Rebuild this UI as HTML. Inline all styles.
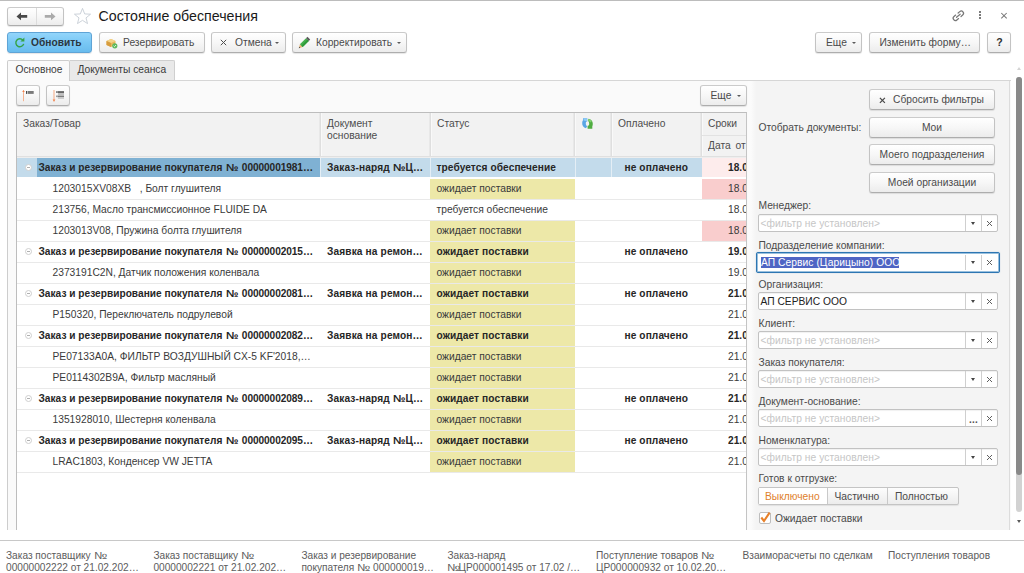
<!DOCTYPE html>
<html lang="ru">
<head>
<meta charset="utf-8">
<title>Состояние обеспечения</title>
<style>
html,body{margin:0;padding:0;}
.hd{color:#4d4d4d;line-height:12px;}
body{width:1024px;height:573px;position:relative;overflow:hidden;background:#fff;font-family:"Liberation Sans",sans-serif;font-size:10.25px;color:#333;}
.a{position:absolute;white-space:nowrap;}
.btn{position:absolute;box-sizing:border-box;border:1px solid #c3c3c3;border-bottom-color:#adadad;border-top-color:#cbcbcb;border-radius:3px;background:linear-gradient(#ffffff,#f7f7f7 50%,#ececec);box-shadow:0 1px 1px rgba(0,0,0,.10);white-space:nowrap;color:#4a4a4a;}
.btn .t{position:absolute;top:0;line-height:19px;}
.arr{position:absolute;width:0;height:0;border-left:2px solid transparent;border-right:2px solid transparent;border-top:2.5px solid #5a5a5a;margin-left:-.6px;}
.lbl{position:absolute;white-space:nowrap;color:#4a4a4a;line-height:12px;}
.inp{position:absolute;box-sizing:border-box;border:1px solid #c2c2c2;border-radius:2px;background:#fff;box-shadow:inset 0 1px 1px rgba(0,0,0,.06);}
.inp .v{position:absolute;left:1.5px;top:1px;line-height:16px;font-size:10.25px;white-space:nowrap;color:#c6c6c6;letter-spacing:.05px;}
.inp .d1,.inp .d2{position:absolute;top:0;bottom:0;width:1px;background:#cfcfcf;}
.inp .d1{left:206px;}.inp .d2{left:222px;}
.inp .ar{position:absolute;left:212px;top:7px;width:0;height:0;border-left:2.5px solid transparent;border-right:2.5px solid transparent;border-top:3px solid #444;}
.inp .x{position:absolute;left:226px;top:4px;width:9px;height:9px;}
.row{position:absolute;left:17px;width:729px;height:20px;}
.sep{position:absolute;left:17px;width:729px;height:1px;background:#e9e9e9;}
.c{position:absolute;top:0;height:20px;line-height:20px;white-space:nowrap;color:#3a3a3a;}
.b{font-weight:bold;color:#262626;font-size:10.15px;letter-spacing:.02px;}
.y{position:absolute;left:413px;width:145px;top:0;height:20px;background:#ede8a8;}
.no{display:inline-block;transform:scaleX(1.1);transform-origin:0 50%;margin:0 1.6px 0 .9px;}
.dg{letter-spacing:-.08px;}
.tg{position:absolute;left:7.7px;top:6.3px;width:7px;height:7px;box-sizing:border-box;border:1px solid #cfcfcf;border-radius:50%;background:#fff;}
.tg:after{content:"";position:absolute;left:1px;top:2px;width:3px;height:1px;background:#b0b0b0;}
.bt{position:absolute;white-space:nowrap;color:#5c5c5c;line-height:13px;font-size:10.15px;}
</style>
</head>
<body>
<!-- top line -->
<div class="a" style="left:0;top:0;width:1024px;height:1px;background:#bcbcbc"></div>

<!-- nav buttons -->
<div class="btn" style="left:7px;top:7px;width:57px;height:19px;"></div>
<div class="a" style="left:36px;top:8px;width:1px;height:17px;background:#dcdcdc"></div>
<svg class="a" style="left:16px;top:12px" width="12" height="9" viewBox="0 0 12 9"><path d="M0.5 4.4L5 0.6V3.1H11.2V5.7H5V8.2Z" fill="#484848"/></svg>
<svg class="a" style="left:44px;top:12px" width="12" height="9" viewBox="0 0 12 9"><path d="M11.5 4.4L7 0.6V3.1H0.8V5.7H7V8.2Z" fill="#aaaaaa"/></svg>
<!-- star -->
<svg class="a" style="left:72.5px;top:7px" width="19" height="18" viewBox="0 0 20 19"><path d="M10 1.5L12.3 7.3L18.5 7.6L13.7 11.5L15.3 17.5L10 14.1L4.7 17.5L6.3 11.5L1.5 7.6L7.7 7.3Z" fill="#fff" stroke="#c3cad2" stroke-width="0.9"/></svg>
<!-- title -->
<div class="a" style="left:98.5px;top:7px;font-size:14.2px;line-height:18px;color:#1a1a1a;">Состояние обеспечения</div>

<!-- window icons -->
<svg class="a" style="left:950.6px;top:8.8px" width="15.1" height="14" viewBox="0 0 14 13"><g fill="none" stroke="#777" stroke-width="1.15" stroke-linecap="round" transform="rotate(-40 6.8 6.3)"><path d="M5.3 4.2H3.3A2.1 2.1 0 0 0 3.3 8.4H5.3"/><path d="M8.3 4.2H10.3A2.1 2.1 0 0 1 10.3 8.4H8.3"/><path d="M4.6 6.3H9"/></g></svg>
<div class="a" style="left:979.4px;top:11px;width:2px;height:2px;background:#7c7c7c;box-shadow:0 3px 0 #7c7c7c,0 6px 0 #7c7c7c"></div>
<svg class="a" style="left:1000px;top:12px" width="8" height="8" viewBox="0 0 8 8"><path d="M1.3 1L6.7 6.4M6.7 1L1.3 6.4" stroke="#787878" stroke-width="1.05"/></svg>

<!-- toolbar -->
<div class="btn" style="left:7px;top:32px;width:85px;height:21px;border-color:#5fa4d6;background:linear-gradient(#92d5fb,#7ac8f5 50%,#69bcee);color:#2d3a45;">
  <svg class="a" style="left:5.5px;top:4px" width="12" height="12" viewBox="0 0 12 12"><path d="M8.9 3.1A4 4 0 1 0 9.7 6.9" fill="none" stroke="#35a345" stroke-width="1.4"/><path d="M10.4 0.6V4.6H6.4Z" fill="#35a345"/></svg>
  <span class="t b" style="left:23px;color:#2b3640;font-size:10.2px">Обновить</span>
</div>
<div class="btn" style="left:99px;top:32px;width:106px;height:21px;">
  <svg class="a" style="left:6px;top:4px" width="12" height="12" viewBox="0 0 12 12"><path d="M0.5 4L5 2L9.5 4V8L5 10L0.5 8Z" fill="#e7b75a"/><path d="M0.5 4L5 6L9.5 4L5 2Z" fill="#f4d48a"/><path d="M5 6V10L0.5 8V4Z" fill="#d79c3e"/><circle cx="8.8" cy="8.8" r="2.6" fill="#5cb85c"/><path d="M7.6 8.8L8.5 9.7L10 8" stroke="#fff" stroke-width=".8" fill="none"/></svg>
  <span class="t" style="left:23px">Резервировать</span>
</div>
<div class="btn" style="left:211px;top:32px;width:75px;height:21px;">
  <svg class="a" style="left:8px;top:6px" width="7" height="7" viewBox="0 0 7 7"><path d="M0.8 0.8L6.2 6.2M6.2 0.8L0.8 6.2" stroke="#505050" stroke-width="1"/></svg>
  <span class="t" style="left:23px">Отмена</span>
  <span class="arr" style="left:64px;top:9px"></span>
</div>
<div class="btn" style="left:292px;top:32px;width:115px;height:21px;">
  <svg class="a" style="left:5px;top:3px" width="13" height="13" viewBox="0 0 13 13"><path d="M0.8 12.2L1.9 8.3L4.7 11.1Z" fill="#eab676"/><path d="M1.9 8.3L8 2.2L10.8 5L4.7 11.1Z" fill="#43b04c"/><path d="M3.3 9.7L9.4 3.6L10.8 5L4.7 11.1Z" fill="#2f9a3a"/><path d="M8 2.2L9.4 0.8L12.2 3.6L10.8 5Z" fill="#5a5a5a"/><path d="M0.8 12.2L1.2 10.7L2.3 11.8Z" fill="#444"/></svg>
  <span class="t" style="left:23px">Корректировать</span>
  <span class="arr" style="left:105px;top:9px"></span>
</div>
<div class="btn" style="left:815px;top:32px;width:47px;height:21px;">
  <span class="t" style="left:10px">Еще</span>
  <span class="arr" style="left:37px;top:9px"></span>
</div>
<div class="btn" style="left:869px;top:32px;width:111px;height:21px;">
  <span class="t" style="left:9.5px">Изменить форму…</span>
</div>
<div class="btn" style="left:987px;top:32px;width:24px;height:21px;">
  <span class="t" style="left:8.3px;font-weight:bold;font-size:10.6px;color:#303030">?</span>
</div>

<!-- tabs -->
<div class="a" style="left:70px;top:60px;width:105px;height:20px;background:#e9e9e9;border:1px solid #cfcfcf;border-left:none;border-bottom:none;box-sizing:border-box;border-radius:0 2px 0 0"></div>
<div class="a" style="left:7px;top:80px;width:1004px;height:450px;background:#fafafa;border-left:1px solid #cdcdcd;border-top:1px solid #d6d6d6;box-sizing:border-box;"></div>
<div class="a" style="left:7px;top:60px;width:63px;height:21px;background:#fafafa;border:1px solid #cdcdcd;border-bottom:none;box-sizing:border-box;border-radius:2px 2px 0 0"></div>
<div class="a" style="left:15.5px;top:63px;line-height:13px;color:#3a3a3a">Основное</div>
<div class="a" style="left:77.5px;top:63px;line-height:13px;color:#3a3a3a">Документы сеанса</div>

<!-- small buttons -->
<div class="btn" style="left:16px;top:85px;width:24px;height:21px;">
  <svg class="a" style="left:5px;top:3px" width="13" height="13" viewBox="0 0 13 13"><path d="M1.5 12.2V1.5" stroke="#f6a176" stroke-width="0.8"/><path d="M0.2 2.9L1.5 0.9L2.8 2.9Z" fill="#f2814a"/><rect x="4" y="2" width="1.1" height="2.9" fill="#4a4a4a"/><rect x="5.6" y="2" width="6.1" height="2.9" fill="#7a7a7a"/></svg>
</div>
<div class="btn" style="left:46px;top:85px;width:24px;height:21px;">
  <svg class="a" style="left:5px;top:3px" width="13" height="13" viewBox="0 0 13 13"><path d="M2 1V11.5" stroke="#f6a176" stroke-width="0.9"/><path d="M0.7 10.6L2 12.9L3.3 10.6Z" fill="#f2814a"/><rect x="4.3" y="2.1" width="0.9" height="1.9" fill="#555"/><rect x="5.4" y="2.1" width="6.6" height="1.9" fill="#666"/><rect x="5.9" y="4.1" width="6.1" height="1.8" fill="#b9b9b9"/><rect x="4.3" y="6.5" width="0.9" height="1.6" fill="#777"/><rect x="5.4" y="6.5" width="6.6" height="1.7" fill="#7c7c7c"/><rect x="5.9" y="8.3" width="6.1" height="1.5" fill="#c4c4c4"/></svg>
</div>
<div class="btn" style="left:700px;top:85px;width:46.5px;height:21px;">
  <span class="t" style="left:9.5px">Еще</span>
  <span class="arr" style="left:36.5px;top:9px"></span>
</div>

<!-- TABLE -->
<div class="a" style="left:16px;top:112px;width:731px;height:418px;background:#fff;border-left:1px solid #bdbdbd;border-top:1px solid #bdbdbd;border-right:1px solid #c4c4c4;box-sizing:border-box"></div>
<div class="a" style="left:17px;top:113px;width:729px;height:44px;background:#f2f2f2;border-bottom:1px solid #e0e0e0;box-sizing:border-box"></div>
<div class="a" style="left:17px;top:157px;width:729px;height:1px;background:#eeeeee"></div>
<div class="a" style="left:319px;top:113px;width:3px;height:43px;background:linear-gradient(90deg,#e8e8e8 0,#e8e8e8 1px,#dfdfdf 1px,#dfdfdf 2px,#f9f9f9 2px)"></div>
<div class="a" style="left:429px;top:113px;width:3px;height:43px;background:linear-gradient(90deg,#e8e8e8 0,#e8e8e8 1px,#dfdfdf 1px,#dfdfdf 2px,#f9f9f9 2px)"></div>
<div class="a" style="left:573px;top:113px;width:3px;height:43px;background:linear-gradient(90deg,#e8e8e8 0,#e8e8e8 1px,#dfdfdf 1px,#dfdfdf 2px,#f9f9f9 2px)"></div>
<div class="a" style="left:610px;top:113px;width:3px;height:43px;background:linear-gradient(90deg,#e8e8e8 0,#e8e8e8 1px,#dfdfdf 1px,#dfdfdf 2px,#f9f9f9 2px)"></div>
<div class="a" style="left:700px;top:113px;width:3px;height:43px;background:linear-gradient(90deg,#e8e8e8 0,#e8e8e8 1px,#dfdfdf 1px,#dfdfdf 2px,#f9f9f9 2px)"></div>
<div class="a" style="left:702px;top:135px;width:44px;height:1px;background:#e2e2e2"></div>
<div class="a hd" style="left:23px;top:118px;">Заказ/Товар</div>
<div class="a hd" style="left:327px;top:118px;">Документ</div>
<div class="a hd" style="left:327px;top:130px;">основание</div>
<div class="a hd" style="left:437px;top:118px;">Статус</div>
<div class="a hd" style="left:618px;top:118px;">Оплачено</div>
<div class="a hd" style="left:708px;top:118px;">Сроки</div>
<div class="a hd" style="left:708px;top:140px;width:38px;overflow:hidden;word-spacing:2px;">Дата от</div>
<svg class="a" style="left:582px;top:118px" width="11" height="11" viewBox="0 0 11 11"><path d="M1 0.2H5.3V3.5H4.7C4 3.8 3.8 4.4 3.8 5.3C3.8 6.6 4.3 7.6 5.2 8.3L4 10.3C1.4 9.6 0 7.6 0.2 5C0.3 3.6 0.6 2.8 1 2.3Z" fill="#5aa6e4"/><path d="M1.4 0.3H5V3H3.6L1.6 2.4Z" fill="#8dcaf6"/><path d="M6.6 0.7C9.2 1.2 10.8 3.2 10.8 5.8C10.8 7 10.6 7.8 10.3 8.3V10.8H5.6V7.7H6.3C7 7.4 7.2 6.8 7.2 5.8C7.2 4.5 6.7 3.5 5.8 2.8Z" fill="#50ad42"/><path d="M6.5 1C8 1.3 9.2 2 9.9 3.2L8.2 4.4C7.8 3.6 7 3 5.9 2.6Z" fill="#7fd070"/></svg>
<div class="row" style="top:158px">
<div class="a" style="left:0;top:0;width:729px;height:19px;background:#c3dbeb"></div>
<div class="a" style="left:20px;top:0;width:283px;height:19px;background:#7fb1d3"></div>
<div class="a" style="left:303px;top:0;width:1px;height:19px;background:#e4eef5"></div>
<div class="a" style="left:413px;top:0;width:1px;height:19px;background:#e4eef5"></div>
<div class="a" style="left:558px;top:0;width:1px;height:19px;background:#e4eef5"></div>
<div class="a" style="left:594px;top:0;width:1px;height:19px;background:#e4eef5"></div>
<div class="a" style="left:685px;top:0;width:1px;height:19px;background:#e4eef5"></div>
<div class="a" style="left:685px;top:0;width:44px;height:19px;background:#fdecec"></div>
<div class="tg"></div>
<div class="c b" style="left:21.5px">Заказ и резервирование покупателя <span class="no">№</span> <span class="dg">00000001981</span>…</div>
<div class="c b" style="left:310px;letter-spacing:.14px">Заказ-наряд <span class="no" style="margin:0 1.2px 0 0">№</span>Ц…</div>
<div class="c b" style="left:419.5px;letter-spacing:.1px">требуется обеспечение</div>
<div class="c b" style="left:607.5px;letter-spacing:.1px">не оплачено</div>
<div class="c b" style="left:711px;width:18px;overflow:hidden">18.0</div>
</div>
<div class="sep" style="top:178px;background:#fff"></div>
<div class="row" style="top:179px">
<div class="y"></div>
<div class="a" style="left:685px;top:0;width:44px;height:20px;background:#f9cdcd"></div>
<div class="c" style="left:35.5px">1203015XV08XB&nbsp;&nbsp; , Болт глушителя</div>
<div class="c" style="left:419.5px">ожидает поставки</div>
<div class="c" style="left:711px;width:18px;overflow:hidden">18.0</div>
</div>
<div class="sep" style="top:199px"></div>
<div class="row" style="top:200px">
<div class="c" style="left:35.5px">213756, Масло трансмиссионное FLUIDE DA</div>
<div class="c" style="left:419.5px">требуется обеспечение</div>
<div class="c" style="left:711px;width:18px;overflow:hidden">18.0</div>
</div>
<div class="sep" style="top:220px"></div>
<div class="row" style="top:221px">
<div class="y"></div>
<div class="a" style="left:685px;top:0;width:44px;height:20px;background:#f9cdcd"></div>
<div class="c" style="left:35.5px">1203013V08, Пружина болта глушителя</div>
<div class="c" style="left:419.5px">ожидает поставки</div>
<div class="c" style="left:711px;width:18px;overflow:hidden">18.0</div>
</div>
<div class="sep" style="top:241px"></div>
<div class="row" style="top:242px">
<div class="y"></div>
<div class="tg"></div>
<div class="c b" style="left:21.5px">Заказ и резервирование покупателя <span class="no">№</span> <span class="dg">00000002015</span>…</div>
<div class="c b" style="left:310px;letter-spacing:.14px">Заявка на ремон…</div>
<div class="c b" style="left:419.5px;letter-spacing:.1px">ожидает поставки</div>
<div class="c b" style="left:607.5px;letter-spacing:.1px">не оплачено</div>
<div class="c b" style="left:711px;width:18px;overflow:hidden">19.0</div>
</div>
<div class="sep" style="top:262px"></div>
<div class="row" style="top:263px">
<div class="y"></div>
<div class="c" style="left:35.5px">2373191C2N, Датчик положения коленвала</div>
<div class="c" style="left:419.5px">ожидает поставки</div>
<div class="c" style="left:711px;width:18px;overflow:hidden">19.0</div>
</div>
<div class="sep" style="top:283px"></div>
<div class="row" style="top:284px">
<div class="y"></div>
<div class="tg"></div>
<div class="c b" style="left:21.5px">Заказ и резервирование покупателя <span class="no">№</span> <span class="dg">00000002081</span>…</div>
<div class="c b" style="left:310px;letter-spacing:.14px">Заявка на ремон…</div>
<div class="c b" style="left:419.5px;letter-spacing:.1px">ожидает поставки</div>
<div class="c b" style="left:607.5px;letter-spacing:.1px">не оплачено</div>
<div class="c b" style="left:711px;width:18px;overflow:hidden">21.0</div>
</div>
<div class="sep" style="top:304px"></div>
<div class="row" style="top:305px">
<div class="y"></div>
<div class="c" style="left:35.5px">P150320, Переключатель подрулевой</div>
<div class="c" style="left:419.5px">ожидает поставки</div>
<div class="c" style="left:711px;width:18px;overflow:hidden">21.0</div>
</div>
<div class="sep" style="top:325px"></div>
<div class="row" style="top:326px">
<div class="y"></div>
<div class="tg"></div>
<div class="c b" style="left:21.5px">Заказ и резервирование покупателя <span class="no">№</span> <span class="dg">00000002082</span>…</div>
<div class="c b" style="left:310px;letter-spacing:.14px">Заявка на ремон…</div>
<div class="c b" style="left:419.5px;letter-spacing:.1px">ожидает поставки</div>
<div class="c b" style="left:607.5px;letter-spacing:.1px">не оплачено</div>
<div class="c b" style="left:711px;width:18px;overflow:hidden">21.0</div>
</div>
<div class="sep" style="top:346px"></div>
<div class="row" style="top:347px">
<div class="y"></div>
<div class="c" style="left:35.5px">PE07133A0A, ФИЛЬТР ВОЗДУШНЫЙ CX-5 KF'2018,…</div>
<div class="c" style="left:419.5px">ожидает поставки</div>
<div class="c" style="left:711px;width:18px;overflow:hidden">21.0</div>
</div>
<div class="sep" style="top:367px"></div>
<div class="row" style="top:368px">
<div class="y"></div>
<div class="c" style="left:35.5px">PE0114302B9A, Фильтр масляный</div>
<div class="c" style="left:419.5px">ожидает поставки</div>
<div class="c" style="left:711px;width:18px;overflow:hidden">21.0</div>
</div>
<div class="sep" style="top:388px"></div>
<div class="row" style="top:389px">
<div class="y"></div>
<div class="tg"></div>
<div class="c b" style="left:21.5px">Заказ и резервирование покупателя <span class="no">№</span> <span class="dg">00000002089</span>…</div>
<div class="c b" style="left:310px;letter-spacing:.14px">Заказ-наряд <span class="no" style="margin:0 1.2px 0 0">№</span>Ц…</div>
<div class="c b" style="left:419.5px;letter-spacing:.1px">ожидает поставки</div>
<div class="c b" style="left:607.5px;letter-spacing:.1px">не оплачено</div>
<div class="c b" style="left:711px;width:18px;overflow:hidden">21.0</div>
</div>
<div class="sep" style="top:409px"></div>
<div class="row" style="top:410px">
<div class="y"></div>
<div class="c" style="left:35.5px">1351928010, Шестерня коленвала</div>
<div class="c" style="left:419.5px">ожидает поставки</div>
<div class="c" style="left:711px;width:18px;overflow:hidden">21.0</div>
</div>
<div class="sep" style="top:430px"></div>
<div class="row" style="top:431px">
<div class="y"></div>
<div class="tg"></div>
<div class="c b" style="left:21.5px">Заказ и резервирование покупателя <span class="no">№</span> <span class="dg">00000002095</span>…</div>
<div class="c b" style="left:310px;letter-spacing:.14px">Заказ-наряд <span class="no" style="margin:0 1.2px 0 0">№</span>Ц…</div>
<div class="c b" style="left:419.5px;letter-spacing:.1px">ожидает поставки</div>
<div class="c b" style="left:607.5px;letter-spacing:.1px">не оплачено</div>
<div class="c b" style="left:711px;width:18px;overflow:hidden">21.0</div>
</div>
<div class="sep" style="top:451px"></div>
<div class="row" style="top:452px">
<div class="y"></div>
<div class="c" style="left:35.5px">LRAC1803, Конденсер VW JETTA</div>
<div class="c" style="left:419.5px">ожидает поставки</div>
<div class="c" style="left:711px;width:18px;overflow:hidden">21.0</div>
</div>
<div class="sep" style="top:472px"></div>

<!-- RIGHT PANEL -->
<div class="a" style="left:748px;top:81px;width:262px;height:449px;background:linear-gradient(90deg,#fbfbfb 0,#fbfbfb 3px,#f4f4f4 8px);border-right:1px solid #dcdcdc;box-sizing:border-box"></div>
<div class="btn" style="left:869px;top:89px;width:126px;height:21px;"><svg class="a" style="left:9px;top:6.5px" width="7" height="7" viewBox="0 0 7 7"><path d="M0.9 0.9L5.9 5.9M5.9 0.9L0.9 5.9" stroke="#4a4a4a" stroke-width="1.25"/></svg><span class="t" style="left:23px">Сбросить фильтры</span></div>
<div class="btn" style="left:869px;top:117px;width:126px;height:21px;"><span class="t" style="left:0;width:100%;text-align:center">Мои</span></div>
<div class="btn" style="left:869px;top:144px;width:126px;height:21px;"><span class="t" style="left:0;width:100%;text-align:center">Моего подразделения</span></div>
<div class="btn" style="left:869px;top:172px;width:126px;height:21px;"><span class="t" style="left:0;width:100%;text-align:center">Моей организации</span></div>
<div class="lbl" style="left:758.5px;top:122px">Отобрать документы:</div>
<div class="lbl" style="left:758.5px;top:200px">Менеджер:</div><div class="inp" style="left:758px;top:214px;width:240px;height:18px;"><div class="v">&lt;фильтр не установлен&gt;</div><div class="d1"></div><div class="d2"></div><div class="ar"></div><svg class="x" viewBox="0 0 9 9"><path d="M2 2L7 7M7 2L2 7" stroke="#606060" stroke-width="1"/></svg></div>
<div class="lbl" style="left:758.5px;top:240px">Подразделение компании:</div><div class="inp" style="left:756px;top:252px;width:244px;height:21px;border:1px solid #2d76b2;border-radius:2px;box-shadow:inset 0 0 0 1px rgba(70,140,195,.55),0 0 1px rgba(45,118,178,.5);"><div class="a" style="left:4px;top:3.5px;width:138px;height:11px;background:#4f65c4"></div><div class="v" style="left:4px;top:2px;color:#fff;">АП Сервис (Царицыно) ООО</div><div class="d1" style="left:208px;top:2px;bottom:2px"></div><div class="d2" style="left:224px;top:2px;bottom:2px"></div><div class="ar" style="left:214px;top:8px"></div><svg class="x" style="left:228px;top:5px" viewBox="0 0 9 9"><path d="M2 2L7 7M7 2L2 7" stroke="#606060" stroke-width="1"/></svg></div>
<div class="lbl" style="left:758.5px;top:279px">Организация:</div><div class="inp" style="left:758px;top:292px;width:240px;height:18px;"><div class="v" style="color:#222;letter-spacing:0">АП СЕРВИС ООО</div><div class="d1"></div><div class="d2"></div><div class="ar"></div><svg class="x" viewBox="0 0 9 9"><path d="M2 2L7 7M7 2L2 7" stroke="#606060" stroke-width="1"/></svg></div>
<div class="lbl" style="left:758.5px;top:318px">Клиент:</div><div class="inp" style="left:758px;top:331px;width:240px;height:18px;"><div class="v">&lt;фильтр не установлен&gt;</div><div class="d1"></div><div class="d2"></div><div class="ar"></div><svg class="x" viewBox="0 0 9 9"><path d="M2 2L7 7M7 2L2 7" stroke="#606060" stroke-width="1"/></svg></div>
<div class="lbl" style="left:758.5px;top:357px">Заказ покупателя:</div><div class="inp" style="left:758px;top:370px;width:240px;height:18px;"><div class="v">&lt;фильтр не установлен&gt;</div><div class="d1"></div><div class="d2"></div><div class="ar"></div><svg class="x" viewBox="0 0 9 9"><path d="M2 2L7 7M7 2L2 7" stroke="#606060" stroke-width="1"/></svg></div>
<div class="lbl" style="left:758.5px;top:396px">Документ-основание:</div><div class="inp" style="left:758px;top:409px;width:240px;height:18px;"><div class="v">&lt;фильтр не установлен&gt;</div><div class="d1"></div><div class="d2"></div><div class="a" style="left:210px;top:2px;line-height:16px;font-size:10px;font-weight:bold;color:#555;letter-spacing:.2px">...</div><svg class="x" viewBox="0 0 9 9"><path d="M2 2L7 7M7 2L2 7" stroke="#606060" stroke-width="1"/></svg></div>
<div class="lbl" style="left:758.5px;top:435px">Номенклатура:</div><div class="inp" style="left:758px;top:448px;width:240px;height:18px;"><div class="v">&lt;фильтр не установлен&gt;</div><div class="d1"></div><div class="d2"></div><div class="ar"></div><svg class="x" viewBox="0 0 9 9"><path d="M2 2L7 7M7 2L2 7" stroke="#606060" stroke-width="1"/></svg></div>
<div class="lbl" style="left:758.5px;top:473px">Готов к отгрузке:</div>
<div class="a" style="left:758px;top:487px;width:201px;height:18px;box-sizing:border-box;border:1px solid #c4c4c4;border-radius:2px;background:linear-gradient(#fdfdfd,#ececec);box-shadow:0 1px 1px rgba(0,0,0,.08)"></div>
<div class="a" style="left:759px;top:488px;width:68px;height:16px;background:#fff"></div>
<div class="a" style="left:827px;top:488px;width:1px;height:16px;background:#c9c9c9"></div>
<div class="a" style="left:887px;top:488px;width:1px;height:16px;background:#c9c9c9"></div>
<div class="lbl" style="left:765px;top:491px;color:#e0802a">Выключено</div>
<div class="lbl" style="left:834.5px;top:491px">Частично</div>
<div class="lbl" style="left:895px;top:491px">Полностью</div>
<div class="a" style="left:758.5px;top:512px;width:12px;height:12px;box-sizing:border-box;border:1px solid #bdbdbd;border-radius:2px;background:#fff"></div>
<svg class="a" style="left:759px;top:510px" width="13" height="14" viewBox="0 0 13 14"><path d="M2.3 7.5L5 11L10.6 2.6" fill="none" stroke="#e8812a" stroke-width="2.1"/></svg>
<div class="lbl" style="left:775px;top:512.5px">Ожидает поставки</div>
<div class="a" style="left:1016px;top:77px;width:6px;height:435px;background:#d2d2d2;border-radius:3px"></div>
<div class="a" style="left:1016px;top:77px;width:6px;height:398px;background:#898989;border-radius:3px"></div>
<div class="a" style="left:1016.5px;top:520px;width:0;height:0;border-left:2.5px solid transparent;border-right:2.5px solid transparent;border-top:3px solid #5a5a5a"></div><div class="a" style="left:1017px;top:67px;width:0;height:0;border-left:2px solid transparent;border-right:2px solid transparent;border-bottom:3px solid #d4d4d4"></div>

<!-- BOTTOM -->
<div class="a" style="left:0;top:530px;width:1024px;height:43px;background:#fff"></div>
<div class="a" style="left:0;top:540px;width:1024px;height:1px;background:#c8c8c8"></div>
<div class="bt" style="left:6px;top:548.5px">Заказ поставщику <span style="display:inline-block;transform:scaleX(1.2);transform-origin:0 50%;margin:0 2px 0 .4px">№</span></div>
<div class="bt" style="left:6px;top:560.5px">00000002222 от 21.02.202…</div>
<div class="bt" style="left:153.4px;top:548.5px">Заказ поставщику <span style="display:inline-block;transform:scaleX(1.2);transform-origin:0 50%;margin:0 2px 0 .4px">№</span></div>
<div class="bt" style="left:153.4px;top:560.5px">00000002221 от 21.02.202…</div>
<div class="bt" style="left:301.4px;top:548.5px">Заказ и резервирование</div>
<div class="bt" style="left:301.4px;top:560.5px">покупателя <span style="display:inline-block;transform:scaleX(1.2);transform-origin:0 50%;margin:0 2px 0 .4px">№</span> 000000019…</div>
<div class="bt" style="left:447.4px;top:548.5px">Заказ-наряд</div>
<div class="bt" style="left:447.4px;top:560.5px"><span style="display:inline-block;transform:scaleX(1.2);transform-origin:0 50%;margin:0 .3px 0 0">№</span>ЦР000001495 от 17.02 /…</div>
<div class="bt" style="left:596px;top:548.5px">Поступление товаров <span style="display:inline-block;transform:scaleX(1.2);transform-origin:0 50%;margin:0 2px 0 .4px">№</span></div>
<div class="bt" style="left:596px;top:560.5px">ЦР000000932 от 10.02.20…</div>
<div class="bt" style="left:742.5px;top:548.5px">Взаиморасчеты по сделкам</div>
<div class="bt" style="left:888px;top:548.5px">Поступления товаров</div>
</body>
</html>
